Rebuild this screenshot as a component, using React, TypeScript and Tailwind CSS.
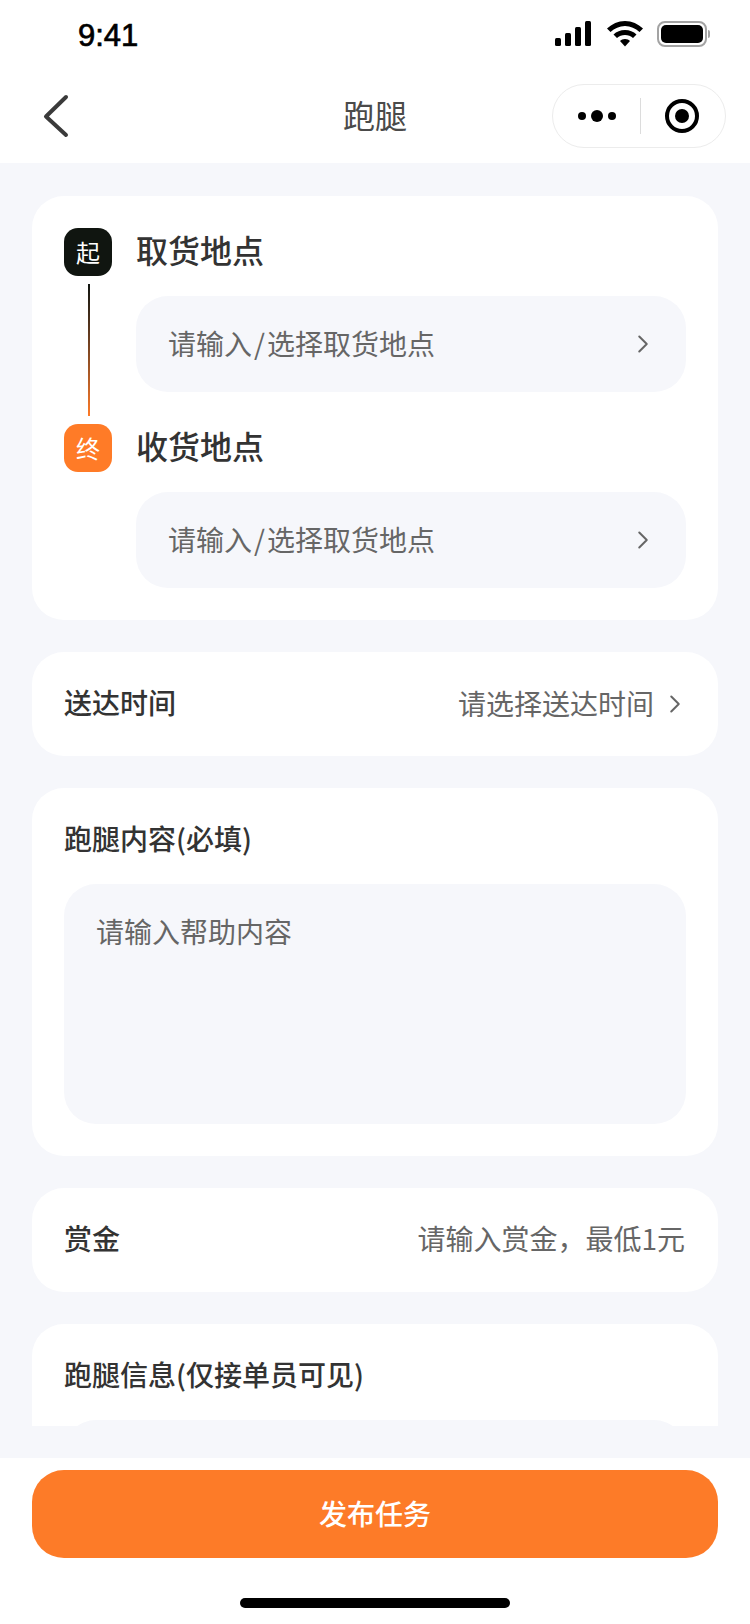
import { ChevronRight } from 'lucide-react';

const font = { cjk: "font-['Noto_Sans_CJK_SC','Noto_Sans',sans-serif]" };

function Chevron() {
  return <ChevronRight size={30} strokeWidth={1.6} className="text-[#666]" />;
}

function StatusBar() {
  return (
    <div className="h-[66px] pt-[18px] pl-[78px] pr-[40px] flex items-start justify-between">
      <span className="font-['Liberation_Sans',sans-serif] text-[31px] leading-[36px] text-black [-webkit-text-stroke:0.7px_black]">9:41</span>
      <div className="flex items-center gap-[14px] pt-[3px]">
        <svg width="38" height="26" viewBox="0 0 38 26">
          <rect x="0" y="17" width="6" height="8" rx="1.5" fill="#000" />
          <rect x="10" y="12" width="6" height="13" rx="1.5" fill="#000" />
          <rect x="20" y="6" width="6" height="19" rx="1.5" fill="#000" />
          <rect x="30" y="0" width="6" height="25" rx="1.5" fill="#000" />
        </svg>
        <svg width="36" height="26" viewBox="0 0 36 26">
          <path d="M18 0C11 0 5 3 0 7.500l3.500 3.500C7.500 7.500 12.500 5 18 5s10.500 2.500 14.500 6l3.500-3.500C31 3 25 0 18 0z" fill="#000" />
          <path d="M18 9c-4.500 0-8.500 1.700-11.500 4.500l3.500 3.500c2-2 5-3 8-3s6 1 8 3l3.500-3.500C26.500 10.700 22.500 9 18 9z" fill="#000" />
          <path d="M18 18c-2 0-4 .8-5 2l5 5.500 5-5.500c-1-1.200-3-2-5-2z" fill="#000" />
        </svg>
        <div className="flex items-center">
          <div className="w-[50px] h-[26px] rounded-[8px] border-2 border-[#a3a3a3] p-[2px]">
            <div className="w-full h-full rounded-[5px] bg-black" />
          </div>
          <div className="w-[2px] h-[8px] rounded-r-sm bg-[#a3a3a3] ml-[1px]" />
        </div>
      </div>
    </div>
  );
}

function NavBar() {
  return (
    <div className="relative h-[97px] flex items-center justify-between pl-[42px] pr-[24px] pt-[2px]">
      <svg width="28" height="44" viewBox="0 0 28 44" fill="none" className="mt-[1px]">
        <path d="M24 3L4 22.500 24 41" stroke="#3a3a3a" strokeWidth="4" strokeLinecap="round" strokeLinejoin="round" />
      </svg>
      <span className="absolute left-0 right-0 text-center text-[32px] leading-[44px] pb-[4px] text-[#4a4a4a]">跑腿</span>
      <div className="w-[174px] h-[64px] rounded-full border border-[#ececec] bg-white flex items-center">
        <div className="w-[87px] flex items-center justify-center gap-[5px]">
          <span className="w-[8px] h-[8px] rounded-full bg-black" />
          <span className="w-[12px] h-[12px] rounded-full bg-black" />
          <span className="w-[8px] h-[8px] rounded-full bg-black" />
        </div>
        <div className="w-px h-[36px] bg-[#dcdcdc]" />
        <div className="flex-1 flex items-center justify-center pr-[2px]">
          <div className="w-[34px] h-[34px] rounded-full border-[4px] border-black flex items-center justify-center">
            <div className="w-[14px] h-[14px] rounded-full bg-black" />
          </div>
        </div>
      </div>
    </div>
  );
}

function AddressInput() {
  return (
    <div className="ml-[72px] h-[96px] rounded-[32px] bg-[#f6f7fb] pl-[32px] pr-[28px] flex items-center justify-between">
      <span className="text-[28px] leading-[40px] pb-[2px] text-[#666]">请输入<span className="mx-[2px]">/</span>选择取货地点</span>
      <Chevron />
    </div>
  );
}

function RowCard({ label, children }: { label: string; children: React.ReactNode }) {
  return (
    <div className="h-[104px] rounded-[32px] bg-white px-[32px] flex items-center justify-between">
      <span className="text-[28px] leading-[40px] pb-[4px] font-medium text-[#333]">{label}</span>
      {children}
    </div>
  );
}

export default function App() {
  return (
    <div className={`${font.cjk} w-[750px] h-[1624px] bg-white flex flex-col overflow-hidden`}>
      <StatusBar />
      <NavBar />

      <div className="flex-1 min-h-0 bg-[#f6f7fb] pt-[33px] pb-[32px] flex flex-col">
        <div className="flex-1 min-h-0 overflow-hidden px-[32px] flex flex-col gap-[32px]">
          {/* Addresses */}
          <div className="shrink-0 h-[424px] rounded-[32px] bg-white p-[32px]">
            <div className="flex items-center gap-[24px] h-[48px]">
              <div className="w-[48px] h-[48px] rounded-[14px] bg-[#101510] text-white text-[24px] flex items-center justify-center">起</div>
              <span className="text-[32px] leading-[44px] pb-[6px] font-medium text-[#333]">取货地点</span>
            </div>
            <div className="relative mt-[20px] h-[128px]">
              <div className="absolute left-[24px] -top-[12px] w-[2px] h-[132px] bg-gradient-to-b from-[#101510] to-[#ff7b27]" />
              <AddressInput />
            </div>
            <div className="flex items-center gap-[24px] h-[48px]">
              <div className="w-[48px] h-[48px] rounded-[14px] bg-[#ff7b27] text-white text-[24px] flex items-center justify-center">终</div>
              <span className="text-[32px] leading-[44px] pb-[6px] font-medium text-[#333]">收货地点</span>
            </div>
            <div className="mt-[20px]">
              <AddressInput />
            </div>
          </div>

          <div className="shrink-0">
            <RowCard label="送达时间">
              <div className="flex items-center gap-[6px] -mr-[4px]">
                <span className="text-[28px] leading-[40px] pb-[2px] text-[#666]">请选择送达时间</span>
                <Chevron />
              </div>
            </RowCard>
          </div>

          {/* Content */}
          <div className="shrink-0 h-[368px] rounded-[32px] bg-white p-[32px]">
            <div className="text-[28px] leading-[36px] font-medium text-[#333]">跑腿内容(必填)</div>
            <div className="mt-[28px] h-[240px] rounded-[32px] bg-[#f6f7fb] px-[32px] py-[27px] text-[28px] leading-[40px] text-[#666]">请输入帮助内容</div>
          </div>

          <div className="shrink-0">
            <RowCard label="赏金">
              <span className="text-[28px] leading-[40px] pb-[4px] pr-[1px] text-[#666]">请输入赏金，最低1元</span>
            </RowCard>
          </div>

          {/* Info, cut off by the scroll area */}
          <div className="shrink-0 rounded-[32px] bg-white p-[32px]">
            <div className="text-[28px] leading-[36px] font-medium text-[#333]">跑腿信息(仅接单员可见)</div>
            <div className="mt-[28px] h-[240px] rounded-[32px] bg-[#f6f7fb]" />
          </div>
        </div>
      </div>

      {/* Footer */}
      <div className="shrink-0 h-[166px] bg-white px-[32px] pt-[12px] flex flex-col">
        <div className="h-[88px] rounded-[32px] bg-[#fd7b28] pb-[2px] flex items-center justify-center text-[28px] font-medium text-white">发布任务</div>
        <div className="mt-[40px] mx-auto w-[270px] h-[10px] rounded-full bg-black" />
      </div>
    </div>
  );
}
